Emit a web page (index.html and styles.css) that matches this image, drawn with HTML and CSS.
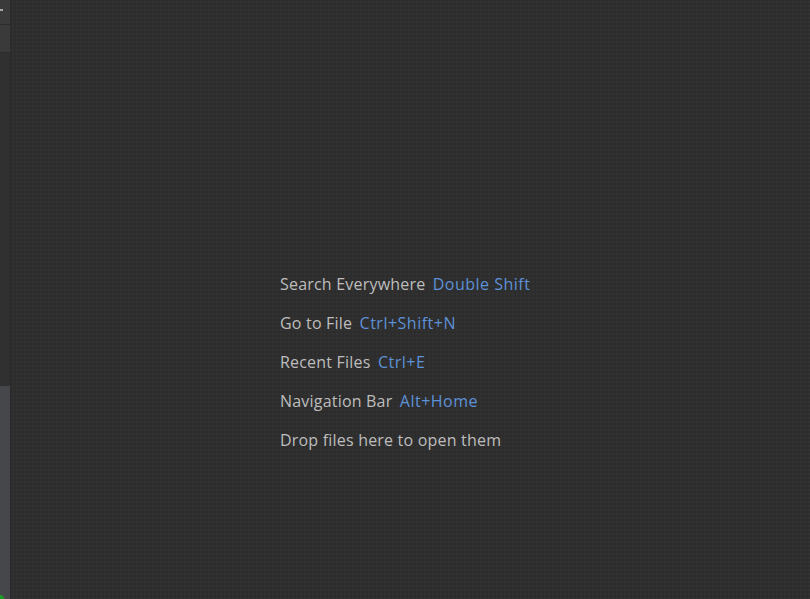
FILE: index.html
```html
<!DOCTYPE html>
<html>
<head>
<meta charset="utf-8">
<link rel="stylesheet" href="styles.css">
</head>
<body>
<div class="app">
  <aside class="side">
    <div class="side-top"><span class="tick"></span></div>
    <div class="side-tab"></div>
    <div class="side-gap"></div>
    <div class="side-bottom"><span class="dot"></span></div>
  </aside>
  <main class="editor">
    <div class="hints">
      <div class="hint">Search Everywhere <span class="key">Double Shift</span></div>
      <div class="hint">Go to File <span class="key">Ctrl+Shift+N</span></div>
      <div class="hint">Recent Files <span class="key">Ctrl+E</span></div>
      <div class="hint">Navigation Bar <span class="key">Alt+Home</span></div>
      <div class="hint">Drop files here to open them</div>
    </div>
  </main>
</div>
</body>
</html>
```
FILE: styles.css
```css
html, body {
  margin: 0;
  padding: 0;
  height: 100%;
  background: #2e2e2e;
}
.app {
  display: flex;
  height: 599px;
  width: 810px;
  overflow: hidden;
}
.side {
  width: 10px;
  flex: none;
  display: flex;
  flex-direction: column;
  border-right: 1px solid #2a2a2a;
}
.side-top {
  height: 24px;
  background: #3a3a3a;
  border-bottom: 1px solid #2b2b2b;
  position: relative;
}
.tick {
  position: absolute;
  left: 0;
  top: 9px;
  width: 3px;
  height: 2px;
  background: #a8a8a8;
}
.side-tab {
  height: 27px;
  background: #3a3a3a;
  border-bottom: 1px solid #2b2b2b;
}
.side-gap {
  height: 333px;
  background: #303030;
}
.side-bottom {
  flex: 1;
  background: #46474b;
  position: relative;
  overflow: hidden;
}
.dot {
  position: absolute;
  left: -4px;
  bottom: -4px;
  width: 8px;
  height: 8px;
  border-radius: 50%;
  background: #1f9a2a;
}
.editor {
  flex: 1;
  background-color: #2d2d2d;
  background-image: radial-gradient(circle, #333333 1px, transparent 1.2px);
  background-size: 4px 4px;
  display: flex;
  align-items: center;
  padding-left: 269px;
}
.hints {
  display: flex;
  flex-direction: column;
  gap: 19px;
  margin-top: 124px;
  font-family: "Open Sans", sans-serif;
  font-size: 16px;
  letter-spacing: 0.2px;
  color: #bdbdbd;
}
.hint {
  line-height: 20px;
  white-space: pre;
}
.key {
  color: #5d91d8;
  margin-left: 3px;
  letter-spacing: 0.5px;
}
```
